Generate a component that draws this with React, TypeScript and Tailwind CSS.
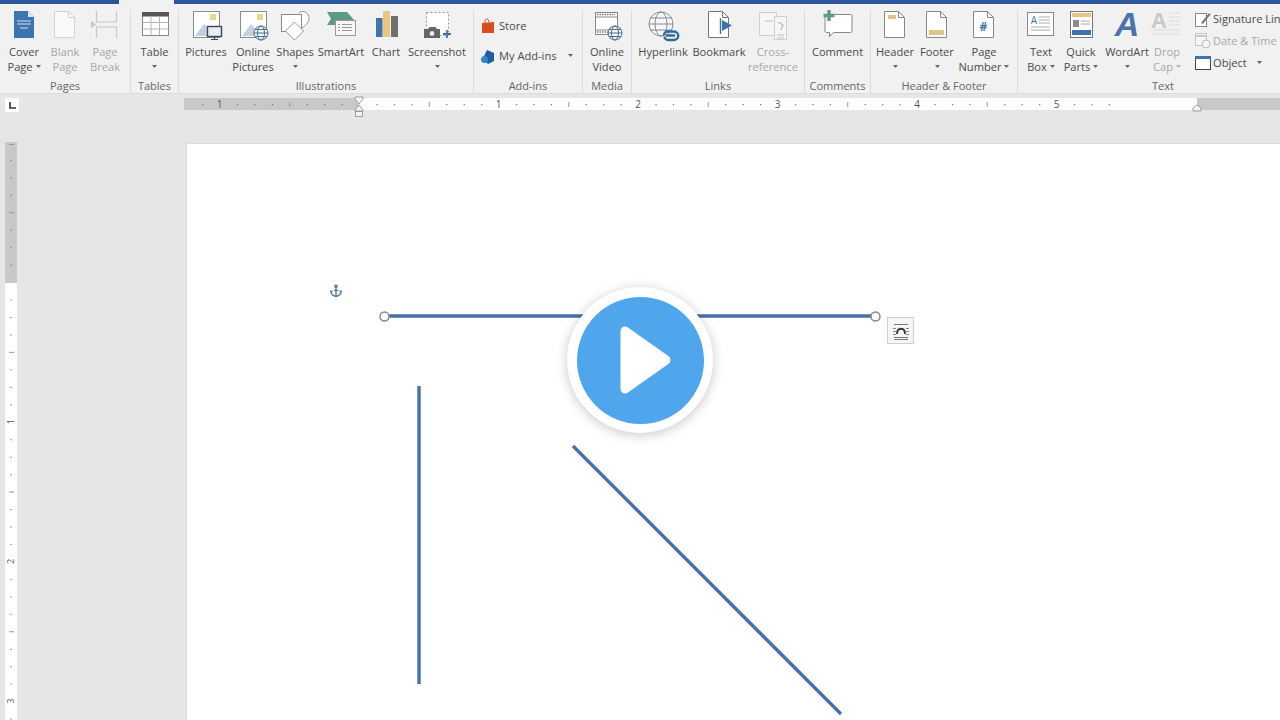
import { Anchor } from "lucide-react";
import type { ReactNode } from "react";

const FONT = "[font-family:'Open_Sans','Liberation_Sans',sans-serif]";

function Caret({ light = false }: { light?: boolean }) {
    return (
        <svg width="5" height="3" viewBox="0 0 5 3" className="inline-block mb-[2px] shrink-0">
            <path d="M0 0h5L2.5 3z" fill={light ? "#b5b5b5" : "#666"} />
        </svg>
    );
}

function Icon({ children }: { children: ReactNode }) {
    return (
        <svg width="32" height="34" viewBox="0 0 32 34" className="overflow-visible">
            {children}
        </svg>
    );
}

type BtnProps = {
    w: string;
    icon: ReactNode;
    line1: string;
    line2?: string;
    caret?: boolean;
    off?: boolean;
};

// Big ribbon button: icon on top, two text rows, caret goes on the last row
function RibbonBtn({ w, icon, line1, line2, caret, off }: BtnProps) {
    return (
        <div className={`${w} shrink-0 flex flex-col items-center ${off ? "text-[#a8a8a8]" : "text-[#4a4a4a]"}`}>
            <div className="h-[32px] mb-[2px] flex items-center justify-center">{icon}</div>
            <div className="h-[15px] leading-[15px] whitespace-nowrap">{line1}</div>
            <div className="h-[16px] leading-[16px] whitespace-nowrap flex items-center gap-[3px]">
                {line2}
                {caret && <Caret light={off} />}
            </div>
        </div>
    );
}

function Group({ w, label, children, noBorder }: { w: string; label: string; children: ReactNode; noBorder?: boolean }) {
    return (
        <div className={`${w} shrink-0 h-full flex flex-col ${noBorder ? "" : "border-r border-[#dadada]"}`}>
            <div className="flex h-[70px]">{children}</div>
            <div className="text-center leading-[16px] text-[11px] text-[#666]">{label}</div>
        </div>
    );
}

function Globe({ x, y, r, c = "#4a6f96" }: { x: number; y: number; r: number; c?: string }) {
    return (
        <g fill="#f4f8fb" stroke={c} strokeWidth="1">
            <circle cx={x} cy={y} r={r} />
            <ellipse cx={x} cy={y} rx={r / 2} ry={r} fill="none" />
            <path d={`M${x - r} ${y}h${r * 2}M${x - r + 1} ${y - r / 2}h${r * 2 - 2}M${x - r + 1} ${y + r / 2}h${r * 2 - 2}`} fill="none" />
        </g>
    );
}

function Landscape() {
    return (
        <g>
            <rect x="3.5" y="2.5" width="26" height="26" fill="#fff" stroke="#8c8c8c" />
            <rect x="20" y="5" width="6" height="6" fill="#e6d98a" />
            <path d="M5 27l9-12 6 7 3-2 5 7z" fill="#c5d0dc" />
        </g>
    );
}

const H_INCH = 139.5;

function HRuler() {
    const ticks = [];
    for (let i = -10; i <= 43; i++) {
        const x = 175 + (i * H_INCH) / 8;
        if (x < 3 || x > 1095) continue;
        if (i % 8 === 0) {
            if (i === 0) continue;
            ticks.push(
                <text key={i} x={x} y={9.5} textAnchor="middle" fontSize="10" fill="#555">
                    {Math.abs(i / 8)}
                </text>
            );
        } else if (i % 4 === 0) {
            ticks.push(<rect key={i} x={x} y={4} width="1" height="5" fill="#999" />);
        } else {
            ticks.push(<rect key={i} x={x} y={6} width="1.2" height="1.2" fill="#777" />);
        }
    }
    return (
        <svg width="1096" height="22" viewBox="0 0 1096 22" className="shrink-0 overflow-visible">
            <rect x="0" y="0" width="1096" height="12" fill="#fff" />
            <rect x="0" y="0" width="175" height="12" fill="#c8c8c8" />
            <rect x="1013" y="0" width="83" height="12" fill="#c8c8c8" />
            {ticks}
            <path d="M171 -1h8v2l-4 5-4-5zM175 7l4 5v1h-8v-1z" fill="#f4f4f4" stroke="#8a8a8a" strokeWidth="0.8" />
            <rect x="171.5" y="13.5" width="7" height="5" fill="#f4f4f4" stroke="#8a8a8a" strokeWidth="0.8" />
            <path d="M1013 7l4 3v3h-8v-3z" fill="#f4f4f4" stroke="#8a8a8a" strokeWidth="0.8" />
        </svg>
    );
}

function VRuler() {
    const marks = [];
    for (let i = -8; i <= 25; i++) {
        const y = 140 + (i * 139.7) / 8;
        if (i % 8 === 0 && i > 0) {
            marks.push(
                <text key={i} x={6} y={y} textAnchor="middle" fontSize="9" fill="#555" transform={`rotate(-90 6 ${y}) translate(0 3)`}>
                    {Math.abs(i / 8)}
                </text>
            );
        } else if (i % 4 === 0 && i !== 0) {
            marks.push(<rect key={i} x={4} y={Math.max(y, 2)} width="5" height="1" fill="#999" />);
        } else if (i !== 0) {
            marks.push(<rect key={i} x={5.5} y={y} width="1.2" height="1.2" fill="#777" />);
        }
    }
    return (
        <svg width="12" height="578" viewBox="0 0 12 578" className="ml-[5px] -mt-[1px]">
            <rect width="12" height="578" fill="#fff" />
            <rect width="12" height="141" fill="#c8c8c8" />
            {marks}
        </svg>
    );
}

function Ribbon() {
    return (
        <div className="h-[90px] shrink-0 flex bg-[#f1f1f1] pt-[6px] text-[11.1px] overflow-hidden">
            <Group w="w-[131px]" label="Pages">
                <RibbonBtn w="w-[48px]" line1="Cover" line2="Page" caret icon={
                    <Icon>
                        <path d="M6 2h14l6 6v21H6z" fill="#3e74ad" />
                        <path d="M20 2l6 6h-6z" fill="#dbe6f1" />
                        <path d="M9 12h14M9 15h14M12 19h8" stroke="#cfe0ee" strokeWidth="1.2" />
                    </Icon>
                } />
                <RibbonBtn w="w-[34px]" line1="Blank" line2="Page" off icon={
                    <Icon>
                        <path d="M5.5 2.5h14l6 6v20h-20z" fill="#fafafa" stroke="#d2d2d2" />
                        <path d="M19.5 2.5v6h6" fill="none" stroke="#d2d2d2" />
                    </Icon>
                } />
                <RibbonBtn w="w-[46px]" line1="Page" line2="Break" off icon={
                    <Icon>
                        <path d="M7.5 2v11h20V2M7.5 29V18h20v11" fill="none" stroke="#c8c8c8" strokeWidth="1.2" />
                        <path d="M2 12l5 3.500-5 3.500z" fill="#c4c4c4" />
                    </Icon>
                } />
            </Group>
            <Group w="w-[48px]" label="Tables">
                <RibbonBtn w="w-[47px]" line1="Table" caret icon={
                    <Icon>
                        <rect x="3.500" y="3.500" width="26" height="23" fill="#fff" stroke="#888" />
                        <rect x="3" y="3" width="27" height="4.500" fill="#555" />
                        <path d="M3.500 13.500h26M3.500 20h26M12 7v19M20.500 7v19" stroke="#b5b5b5" />
                    </Icon>
                } />
            </Group>
            <Group w="w-[295px]" label="Illustrations">
                <RibbonBtn w="w-[54px]" line1="Pictures" icon={
                    <Icon>
                        <Landscape />
                        <rect x="17.500" y="17.500" width="14" height="10" fill="#e6eef4" stroke="#3c4a58" strokeWidth="1.4" />
                        <path d="M24.500 28v2M21 30.500h7" stroke="#3c4a58" strokeWidth="1.2" />
                    </Icon>
                } />
                <RibbonBtn w="w-[40px]" line1="Online" line2="Pictures" icon={
                    <Icon>
                        <Landscape />
                        <Globe x={24} y={24} r={7} />
                    </Icon>
                } />
                <RibbonBtn w="w-[44px]" line1="Shapes" caret icon={
                    <Icon>
                        <path d="M20 4c4-4 11 0 10 6-.5 4-4 7-7 9" fill="#fff" stroke="#999" />
                        <rect x="2.500" y="5.500" width="20" height="17" fill="#fff" stroke="#888" />
                        <path d="M15.500 13l9 9-9 9-9-9z" fill="#fff" stroke="#999" />
                    </Icon>
                } />
                <RibbonBtn w="w-[48px]" line1="SmartArt" icon={
                    <Icon>
                        <path d="M2 3h20l7 8-6 5H10l-8-0 4-6z" fill="#5d9c80" />
                        <rect x="10.500" y="11.500" width="20" height="15" fill="#f6f6f6" stroke="#9a9a9a" />
                        <path d="M17 15.500h10M17 18.500h10M17 21.500h10M13 15.500h2M13 18.500h2M13 21.500h2" stroke="#999" />
                    </Icon>
                } />
                <RibbonBtn w="w-[42px]" line1="Chart" icon={
                    <Icon>
                        <rect x="6" y="9" width="6.500" height="19" fill="#4472a8" />
                        <rect x="13" y="2" width="7" height="26" fill="#e9c77e" />
                        <rect x="21" y="7" width="7" height="21" fill="#707070" />
                    </Icon>
                } />
                <RibbonBtn w="w-[60px]" line1="Screenshot" caret icon={
                    <Icon>
                        <rect x="5.500" y="3.500" width="22" height="23" fill="#fff" stroke="#999" strokeDasharray="2 2" />
                        <path d="M3 20h4l1.500-2h6l1.500 2h3v9H3z" fill="#666" />
                        <circle cx="11" cy="24.500" r="3" fill="#eee" stroke="#555" />
                        <path d="M26 21v8M22 25h8" stroke="#3e74ad" strokeWidth="1.8" />
                    </Icon>
                } />
            </Group>
            <Group w="w-[109px]" label="Add-ins">
                <div className="flex flex-col pl-[7px] pt-[8px] text-[#4a4a4a]">
                    <div className="flex items-center gap-[4px] h-[16px]">
                        <svg width="14" height="16" viewBox="0 0 14 16">
                            <path d="M1 5l12-1v11H1z" fill="#d94f1e" />
                            <path d="M4 5V2.500C4 1 6 0 7 1.500l1.500 3" fill="none" stroke="#d94f1e" />
                        </svg>
                        <span>Store</span>
                    </div>
                    <div className="flex items-center gap-[4px] h-[16px] mt-[14px]">
                        <svg width="14" height="15" viewBox="0 0 14 15">
                            <path d="M6 1l7 3v8l-6 3-2-2V9L3 7z" fill="#1f5f9e" />
                            <circle cx="3.500" cy="10.500" r="3.500" fill="#2f86cc" />
                        </svg>
                        <span>My Add-ins</span>
                        <span className="ml-[8px] flex"><Caret /></span>
                    </div>
                </div>
            </Group>
            <Group w="w-[49px]" label="Media">
                <RibbonBtn w="w-[48px]" line1="Online" line2="Video" icon={
                    <Icon>
                        <rect x="4.500" y="3.500" width="22" height="22" fill="#fff" stroke="#888" />
                        <path d="M4.500 8h22M4.500 21h22" stroke="#888" />
                        <path d="M6 5.500h18M6 23h11" stroke="#777" strokeDasharray="1.500 1" strokeWidth="1.400" />
                        <Globe x={24} y={24} r={7} />
                    </Icon>
                } />
            </Group>
            <Group w="w-[173px]" label="Links">
                <RibbonBtn w="w-[62px]" line1="Hyperlink" icon={
                    <Icon>
                        <Globe x={14} y={15} r={12} c="#8a8a8a" />
                        <path d="M17 26a3.500 3.500 0 0 1 3.500-3.500h4M25 31h-4a3.500 3.500 0 0 1 -3.500-3.500M24 22.500h3a4 4 0 0 1 0 8.500h-3M19 26.500h9" fill="none" stroke="#2f6b9e" strokeWidth="2.400" />
                    </Icon>
                } />
                <RibbonBtn w="w-[50px]" line1="Bookmark" icon={
                    <Icon>
                        <path d="M5.500 2.500h14l6 6v20h-20z" fill="#fff" stroke="#777" />
                        <path d="M19.500 2.500v6h6" fill="none" stroke="#777" />
                        <path d="M17.500 9v16" stroke="#3e74ad" strokeWidth="1.400" />
                        <path d="M19 11l10 5.500-10 5.500z" fill="#3e74ad" />
                    </Icon>
                } />
                <RibbonBtn w="w-[58px]" line1="Cross-" line2="reference" off icon={
                    <Icon>
                        <rect x="2.500" y="3.500" width="17" height="23" fill="#f6f6f6" stroke="#cfcfcf" />
                        <rect x="17.500" y="7.500" width="12" height="23" fill="#f6f6f6" stroke="#cfcfcf" />
                        <path d="M8 12h8M20 26h7M20 29h7" stroke="#bdbdbd" strokeWidth="1.200" />
                        <path d="M21 13l5 3-2 5" fill="none" stroke="#bdbdbd" strokeWidth="1.400" />
                    </Icon>
                } />
            </Group>
            <Group w="w-[66px]" label="Comments">
                <RibbonBtn w="w-[65px]" line1="Comment" icon={
                    <Icon>
                        <path d="M4.500 5.500h24a1.500 1.500 0 0 1 1.500 1.500v15a1.500 1.500 0 0 1 -1.500 1.500h-17l-4 4v-4h-3a1.500 1.500 0 0 1 -1.500-1.500V7a1.500 1.500 0 0 1 1.500-1.500z" fill="#fff" stroke="#888" />
                        <path d="M7 1v11M1.500 6.500h11" stroke="#5d9c80" strokeWidth="3.400" />
                    </Icon>
                } />
            </Group>
            <Group w="w-[147px]" label="Header & Footer">
                <RibbonBtn w="w-[48px]" line1="Header" caret icon={
                    <Icon>
                        <path d="M5.500 2.500h14l6 6v20h-20z" fill="#fff" stroke="#888" />
                        <path d="M19.500 2.500v6h6" fill="none" stroke="#888" />
                        <rect x="9" y="6" width="8" height="4" fill="#e3c684" />
                    </Icon>
                } />
                <RibbonBtn w="w-[36px]" line1="Footer" caret icon={
                    <Icon>
                        <path d="M5.500 2.500h14l6 6v20h-20z" fill="#fff" stroke="#888" />
                        <path d="M19.500 2.500v6h6" fill="none" stroke="#888" />
                        <rect x="8" y="21" width="15" height="5" fill="#e3c684" />
                    </Icon>
                } />
                <RibbonBtn w="w-[58px]" line1="Page" line2="Number" caret icon={
                    <Icon>
                        <path d="M5.500 2.500h14l6 6v20h-20z" fill="#fff" stroke="#888" />
                        <path d="M19.500 2.500v6h6" fill="none" stroke="#888" />
                        <text x="15.500" y="22" textAnchor="middle" fontSize="12" fontWeight="700" fill="#3e74ad">#</text>
                    </Icon>
                } />
            </Group>
            <Group w="w-[290px]" label="Text" noBorder>
                <div className="w-[4px] shrink-0" />
                <RibbonBtn w="w-[38px]" line1="Text" line2="Box" caret icon={
                    <Icon>
                        <rect x="2.500" y="3.500" width="26" height="23" fill="#fff" stroke="#888" />
                        <text x="9" y="15" textAnchor="middle" fontSize="10" fill="#3e74ad">A</text>
                        <path d="M14 8h11M14 11h11M14 14h11M6 18h19M6 21h19" stroke="#aaa" />
                    </Icon>
                } />
                <RibbonBtn w="w-[42px]" line1="Quick" line2="Parts" caret icon={
                    <Icon>
                        <rect x="5.500" y="2.500" width="22" height="26" fill="#fff" stroke="#777" />
                        <rect x="7" y="4" width="19" height="4" fill="#e3c684" />
                        <rect x="8" y="11" width="6" height="7" fill="#8c8c8c" />
                        <path d="M16 12h9M16 15h9" stroke="#aaa" />
                        <rect x="7" y="21" width="19" height="5" fill="#3e74ad" />
                    </Icon>
                } />
                <RibbonBtn w="w-[50px]" line1="WordArt" caret icon={
                    <Icon>
                        <text x="16" y="27" textAnchor="middle" fontSize="34" fontWeight="700" fontStyle="italic" fontFamily="Liberation Sans, sans-serif" fill="#4a74ab">A</text>
                    </Icon>
                } />
                <RibbonBtn w="w-[30px]" line1="Drop" line2="Cap" caret off icon={
                    <Icon>
                        <text x="8" y="19" textAnchor="middle" fontSize="22" fontWeight="700" fontFamily="Liberation Sans, sans-serif" fill="#c8c8c8">A</text>
                        <path d="M18 4h11M18 8h11M18 12h11M18 16h11M1 21h28M1 25h28" stroke="#dcdcdc" />
                    </Icon>
                } />
                <div className="flex flex-col pl-[13px] pt-[1px] whitespace-nowrap text-[#4a4a4a]">
                    <div className="flex items-center gap-[2px] h-[16px]">
                        <svg width="16" height="16" viewBox="0 0 16 16">
                            <rect x="0.500" y="2.500" width="11" height="13" fill="#fff" stroke="#888" />
                            <path d="M6 12L14 2l1.500 1.500L8 13z" fill="#777" />
                        </svg>
                        <span>Signature Line</span>
                    </div>
                    <div className="flex items-center gap-[2px] h-[16px] mt-[6px] text-[#a8a8a8]">
                        <svg width="16" height="16" viewBox="0 0 16 16">
                            <rect x="0.500" y="0.500" width="11" height="12" fill="#f6f6f6" stroke="#c8c8c8" />
                            <path d="M0 3h12" stroke="#c8c8c8" strokeWidth="2" />
                            <circle cx="11" cy="11" r="4" fill="#f6f6f6" stroke="#bbb" />
                        </svg>
                        <span>Date &amp; Time</span>
                    </div>
                    <div className="flex items-center gap-[2px] h-[16px] mt-[6px]">
                        <svg width="16" height="15" viewBox="0 0 16 15">
                            <rect x="0.500" y="0.500" width="15" height="13" fill="#fff" stroke="#444" />
                            <rect x="0" y="0" width="16" height="3" fill="#3e74ad" />
                        </svg>
                        <span>Object</span>
                        <span className="ml-[8px] flex"><Caret /></span>
                    </div>
                </div>
            </Group>
        </div>
    );
}

function PlayOverlay() {
    return (
        <div className="absolute left-[567px] top-[287px] w-[146px] h-[146px] rounded-full bg-white shadow-[0_2px_12px_rgba(0,0,0,0.22)] flex items-center justify-center">
            <div className="w-[127px] h-[127px] rounded-full bg-[#4fa6ec] flex items-center justify-center">
                <svg width="54" height="72" viewBox="0 0 54 72" className="ml-[11px]">
                    <path d="M6 7v58L47 36z" fill="#fff" stroke="#fff" strokeWidth="9" strokeLinejoin="round" />
                </svg>
            </div>
        </div>
    );
}

export default function App() {
    return (
        <div className={`relative w-screen h-screen overflow-hidden flex flex-col bg-[#e6e6e6] ${FONT}`}>
            <div className="h-[4px] shrink-0 flex">
                <div className="w-[119px] bg-[#2b579a]" />
                <div className="w-[55px] bg-[#f1f1f1]" />
                <div className="flex-1 bg-[#2b579a]" />
            </div>
            <Ribbon />
            <div className="h-[50px] shrink-0 flex items-start pt-[4px] border-t border-[#dcdcdc] -mt-[1px]">
                <div className="ml-[5px] w-[14px] h-[14px] bg-white flex items-center justify-center">
                    <svg width="7" height="7" viewBox="0 0 7 7">
                        <path d="M1 0v6h6" fill="none" stroke="#333" strokeWidth="1.600" />
                    </svg>
                </div>
                <div className="ml-[165px]">
                    <HRuler />
                </div>
            </div>
            <div className="flex-1 flex min-h-0">
                <div className="w-[186px] shrink-0">
                    <VRuler />
                </div>
                <div className="flex-1 relative bg-white border-l border-t border-[#dcdcdc]">
                    <svg width="1094" height="577" viewBox="0 0 1094 577" className="absolute -left-px -top-px">
                        <path d="M198 173H689M233 243V541M387 303L655 571" stroke="#4a70a8" strokeWidth="3.400" fill="none" />
                        <circle cx="198.500" cy="173.500" r="4.500" fill="#fff" stroke="#8a8a8a" strokeWidth="1.500" />
                        <circle cx="689.500" cy="173.500" r="4.500" fill="#fff" stroke="#8a8a8a" strokeWidth="1.500" />
                    </svg>
                    <Anchor size={14} strokeWidth={2.4} className="absolute left-[142px] top-[140px] text-[#4d7a9b]" />
                    <div className="absolute left-[700px] top-[173px] w-[27px] h-[27px] bg-[#f6f6f6] border border-[#d0d0d0] flex items-center justify-center">
                        <svg width="20" height="20" viewBox="0 0 20 20">
                            <path d="M3 3.500h14M3 16.500h14M3 18.500h14" stroke="#777" />
                            <path d="M2 7.500h3M15 7.500h3M2 10.500h3M15 10.500h3M2 13.500h3M15 13.500h3" stroke="#888" />
                            <path d="M6 13c0-7 8-7 8 0" fill="none" stroke="#333" strokeWidth="1.800" />
                        </svg>
                    </div>
                </div>
            </div>
            <PlayOverlay />
        </div>
    );
}
